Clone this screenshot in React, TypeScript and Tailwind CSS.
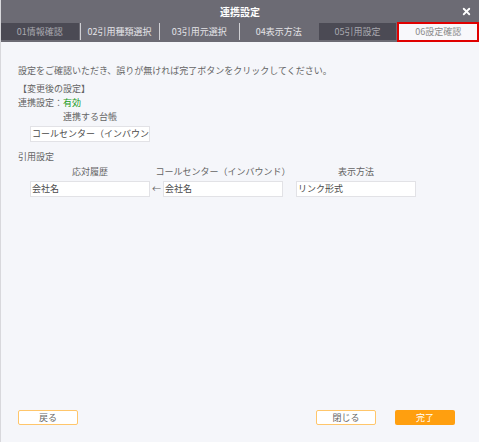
import { X } from 'lucide-react'

const tabs = [
  { label: '01情報確認', tone: 'dark' },
  { label: '02引用種類選択', tone: 'mid' },
  { label: '03引用元選択', tone: 'mid' },
  { label: '04表示方法', tone: 'mid' },
  { label: '05引用設定', tone: 'dark' },
  { label: '06設定確認', tone: 'active' },
]

const font = { fontFamily: '"Noto Sans CJK JP", "Noto Sans", sans-serif' }

export default function App() {
  return (
    <div className="w-[479px] h-[442px] flex flex-col bg-[#f5f6fa] text-[9px] text-[#646464] border-l border-[#d8d8dc]" style={font}>
      {/* title bar */}
      <div className="h-[22px] bg-[#6c6b74] flex items-center justify-center relative shrink-0">
        <span className="text-white text-[10px] font-bold">連携設定</span>
        <X size={11} strokeWidth={4} className="absolute right-[7px] top-[6px] text-white" />
      </div>

      {/* tabs */}
      <div className="flex h-[20px] bg-[#6c6b74] shrink-0">
        {tabs.map((t, i) => (
          <div
            key={t.label}
            className={`flex-1 flex items-center justify-center ${i > 0 ? 'ml-px' : ''} ${
              t.tone === 'dark'
                ? 'bg-[#4b4a54] text-[#a9a9b0] mt-[1px] mb-[2px]'
                : t.tone === 'mid'
                ? 'bg-[#6c6b74] text-[#e4e4e8] mt-[1px] mb-[2px] border-l border-[#d0d0d4]'
                : 'bg-[#f8f8fb] text-[#8a8a8a] border-2 border-[#e00000]'
            }`}
          >
            {t.label}
          </div>
        ))}
      </div>

      {/* body */}
      <div className="flex-1 flex flex-col pl-[17px] pr-[18px] pt-[22px]">
        <p className="leading-[14px]">設定をご確認いただき、誤りが無ければ完了ボタンをクリックしてください。</p>

        <p className="mt-[4px] leading-[14px]">【変更後の設定】</p>
        <p className="leading-[14px]">
          連携設定：<span className="text-[#1a9a1a]">有効</span>
        </p>
        <div className="w-[120px] ml-[12px] text-center leading-[14px]">連携する台帳</div>
        <div className="mt-[2px] ml-[12px] w-[120px] h-[16px] bg-white border border-[#e2e2e6] flex items-center px-[1px] overflow-hidden whitespace-nowrap text-[#4a4a4a]">
          コールセンター（インバウンド）
        </div>

        <p className="mt-[8px] leading-[14px]">引用設定</p>
        <div className="flex ml-[12px] mt-[1px] whitespace-nowrap">
          <div className="w-[120px] text-center leading-[14px]">応対履歴</div>
          <div className="w-[13px]" />
          <div className="w-[120px] flex justify-center leading-[14px]">
            <span>コールセンター（インバウンド）</span>
          </div>
          <div className="w-[13px]" />
          <div className="w-[120px] text-center leading-[14px]">表示方法</div>
        </div>
        <div className="flex items-center ml-[12px] mt-[2px]">
          <div className="w-[120px] h-[16px] bg-white border border-[#e2e2e6] flex items-center px-[1px] text-[#4a4a4a]">会社名</div>
          <div className="w-[13px] text-center text-[#666]">←</div>
          <div className="w-[120px] h-[16px] bg-white border border-[#e2e2e6] flex items-center px-[1px] text-[#4a4a4a]">会社名</div>
          <div className="w-[13px]" />
          <div className="w-[120px] h-[16px] bg-white border border-[#e2e2e6] flex items-center px-[1px] text-[#4a4a4a]">リンク形式</div>
        </div>

        <div className="flex-1" />

        <div className="flex items-center pb-[17px] pr-[6px]">
          <button className="w-[60px] h-[15px] bg-white border border-[#ffc66b] rounded-[2px] text-[#666] text-[9px] leading-none">戻る</button>
          <div className="flex-1" />
          <button className="w-[60px] h-[15px] bg-white border border-[#ffc66b] rounded-[2px] text-[#666] text-[9px] leading-none">閉じる</button>
          <button className="ml-[19px] w-[60px] h-[15px] bg-[#ff9f0f] rounded-[2px] text-white text-[9px] leading-none">完了</button>
        </div>
      </div>
    </div>
  )
}
